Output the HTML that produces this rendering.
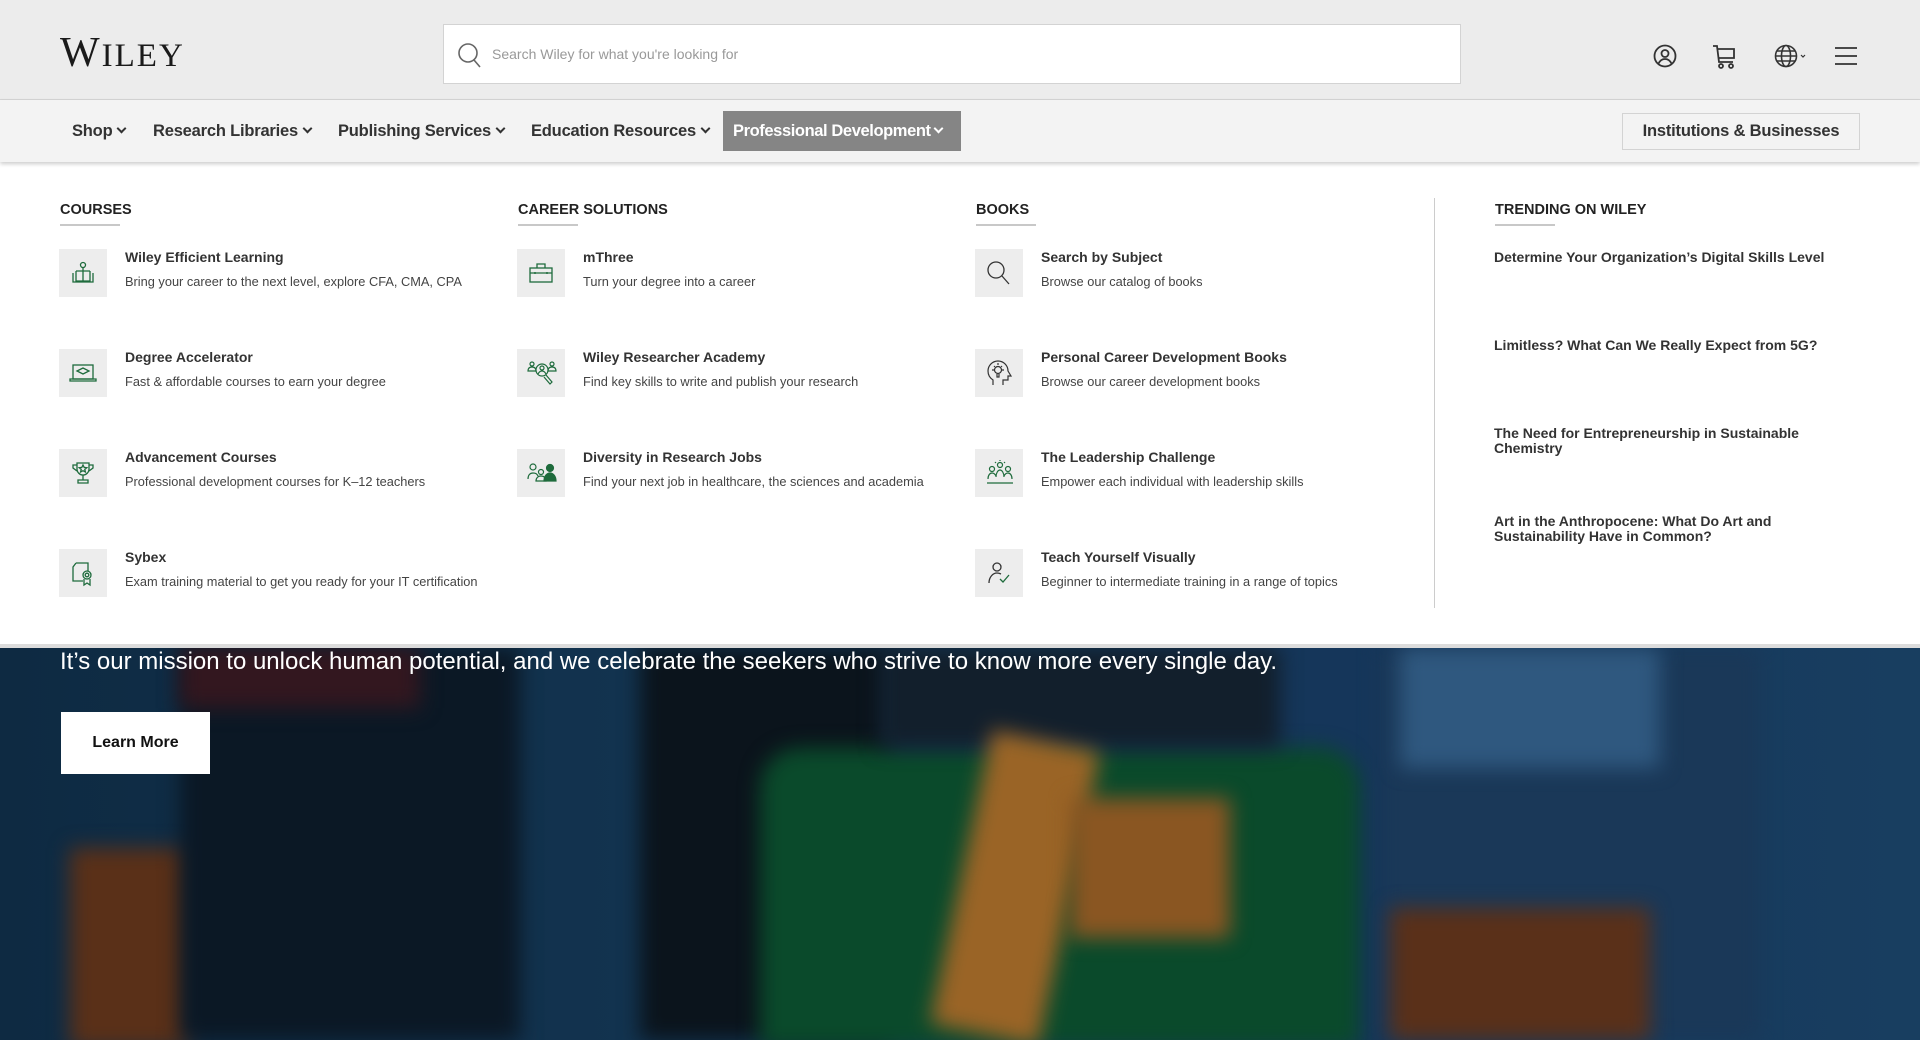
<!DOCTYPE html>
<html><head><meta charset="utf-8"><style>
*{box-sizing:border-box;margin:0;padding:0}
body{width:1920px;height:1040px;overflow:hidden;font-family:"Liberation Sans",Arial,sans-serif;background:#0f2c47;position:relative}
.top{position:absolute;left:0;top:0;width:1920px;height:100px;background:#ececec;border-bottom:1px solid #d6d6d6}
.logo{position:absolute;left:60px;top:32px;font-family:"Liberation Serif",serif;font-size:42px;letter-spacing:2px;color:#1a1a1a;line-height:1}
.logo small{font-size:33px}
.search{position:absolute;left:443px;top:24px;width:1018px;height:60px;background:#fff;border:1px solid #d3d3d3}
.search span{position:absolute;left:48px;top:21px;font-size:14px;color:#999}
.nav{position:absolute;left:0;top:100px;width:1920px;height:62px;background:#f3f3f3;box-shadow:0 2px 4px rgba(0,0,0,.2);z-index:2}
.nav .it{position:absolute;top:11px;height:40px;line-height:40px;font-size:16.5px;font-weight:bold;color:#333;padding:0 12px;letter-spacing:-.2px;white-space:nowrap}
.nav .it i{display:inline-block;width:7px;height:7px;border-right:2px solid currentColor;border-bottom:2px solid currentColor;transform:rotate(45deg);margin-left:6px;position:relative;top:-4px}
.nav .act{background:#858585;color:#fff;padding:0 10px;letter-spacing:-.4px}
.nav .act i{margin-left:4px}
.inst{position:absolute;left:1622px;top:13px;width:238px;height:37px;border:1px solid #d3d3d3;font-size:16.5px;font-weight:bold;color:#333;text-align:center;line-height:35px;letter-spacing:-.2px}
.drop{position:absolute;left:0;top:162px;width:1920px;height:486px;background:#fff;border-bottom:4px solid #dcdcdc;z-index:1}
.hd{position:absolute;top:40px;font-size:14.5px;font-weight:bold;color:#222}
.hd:after{content:"";position:absolute;left:0;top:22px;width:60px;height:2px;background:#c8c8c8}
.row{position:absolute;width:440px;height:50px}
.ic{position:absolute;left:0;top:0;width:48px;height:48px;background:#ededed}
.ic svg{position:absolute;left:10px;top:10px}
.t{position:absolute;left:66px;top:0;font-size:14px;font-weight:bold;color:#333;white-space:nowrap}
.d{position:absolute;left:66px;top:25px;font-size:12.8px;color:#444;white-space:nowrap}
.div{position:absolute;left:1434px;top:36px;width:1px;height:410px;background:#ccc}
.tr{position:absolute;left:1494px;width:370px;font-size:14px;font-weight:bold;color:#333;line-height:15px}
.hero{position:absolute;left:0;top:648px;width:1920px;height:392px;overflow:hidden;background:#12314d}
.b{position:absolute;filter:blur(10px)}
.htxt{position:absolute;left:60px;top:648px;font-size:24px;color:#fff;z-index:3}
.lm{position:absolute;left:61px;top:712px;width:149px;height:62px;background:#fff;font-size:16px;font-weight:bold;color:#111;text-align:center;line-height:62px;z-index:3}
</style></head><body>
<div class="top">
 <div class="logo">W<small>ILEY</small></div>
 <div class="search">
  <svg style="position:absolute;left:12px;top:16px" width="26" height="28" viewBox="0 0 26 28"><circle cx="12" cy="12" r="9" fill="none" stroke="#666" stroke-width="1.6"/><path d="M18 19l6 7" stroke="#666" stroke-width="1.6"/></svg>
  <span>Search Wiley for what you're looking for</span>
 </div>
 <svg style="position:absolute;left:1653px;top:44px" width="24" height="24" viewBox="0 0 24 24" fill="none" stroke="#333" stroke-width="1.8"><circle cx="12" cy="12" r="10.5"/><circle cx="12" cy="9.5" r="3.5"/><path d="M5.5 19.5c1.5-3 4-4.5 6.5-4.5s5 1.5 6.5 4.5"/></svg>
 <svg style="position:absolute;left:1712px;top:44px" width="26" height="26" viewBox="0 0 26 26" fill="none" stroke="#333" stroke-width="1.8"><path d="M1 2h4l2 16h14M6 5h16v9H7"/><circle cx="9" cy="22" r="2"/><circle cx="19" cy="22" r="2"/></svg>
 <svg style="position:absolute;left:1774px;top:44px" width="36" height="24" viewBox="0 0 36 24" fill="none" stroke="#333" stroke-width="1.6"><circle cx="12" cy="12" r="10.5"/><ellipse cx="12" cy="12" rx="4.5" ry="10.5"/><path d="M1.5 12h21M3 7h18M3 17h18"/><path d="M27 11l2 2 2-2" stroke-width="1.2"/></svg>
 <svg style="position:absolute;left:1834px;top:46px" width="24" height="20" viewBox="0 0 24 20" stroke="#333" stroke-width="1.8"><path d="M1 2h22M1 10h22M1 18h22"/></svg>
</div>
<div class="nav">
 <div class="it" style="left:60px">Shop<i></i></div>
 <div class="it" style="left:141px">Research Libraries<i></i></div>
 <div class="it" style="left:326px">Publishing Services<i></i></div>
 <div class="it" style="left:519px">Education Resources<i></i></div>
 <div class="it act" style="left:723px;width:238px">Professional Development<i></i></div>
 <div class="inst">Institutions &amp; Businesses</div>
</div>
<div class="drop">
 <div class="hd" style="left:60px">COURSES</div>
 <div class="hd" style="left:518px">CAREER SOLUTIONS</div>
 <div class="hd" style="left:976px">BOOKS</div>
 <div class="hd" style="left:1495px">TRENDING ON WILEY</div>
 <div class="div"></div>

 <div class="row" style="left:59px;top:87px"><div class="ic"><svg width="28" height="28" viewBox="0 0 28 28" fill="none" stroke="#1e6b3c" stroke-width="1.3"><circle cx="14" cy="6" r="2.5"/><path d="M14 9v14M7 12h14M7 12v10h14V12M4 14v9h20V14"/></svg></div><div class="t">Wiley Efficient Learning</div><div class="d">Bring your career to the next level, explore CFA, CMA, CPA</div></div>
 <div class="row" style="left:59px;top:187px"><div class="ic"><svg width="28" height="28" viewBox="0 0 28 28" fill="none" stroke="#1e6b3c" stroke-width="1.3"><rect x="4" y="6" width="20" height="14"/><path d="M1 20h26v2H1zM8 12l6-3 6 3-6 3z"/></svg></div><div class="t">Degree Accelerator</div><div class="d">Fast &amp; affordable courses to earn your degree</div></div>
 <div class="row" style="left:59px;top:287px"><div class="ic"><svg width="28" height="28" viewBox="0 0 28 28" fill="none" stroke="#1e6b3c" stroke-width="1.3"><path d="M8 4h12v6a6 6 0 0 1-12 0zM8 6H4v3l4 3M20 6h4v3l-4 3M14 16v5M9 21h10v3H9z"/><path d="M14 6l1.2 2.4 2.6.3-2 1.7.6 2.6-2.4-1.3-2.4 1.3.6-2.6-2-1.7 2.6-.3z"/></svg></div><div class="t">Advancement Courses</div><div class="d">Professional development courses for K–12 teachers</div></div>
 <div class="row" style="left:59px;top:387px"><div class="ic"><svg width="28" height="28" viewBox="0 0 28 28" fill="none" stroke="#1e6b3c" stroke-width="1.3"><path d="M7 4h12v8M7 4L4 8v14h10"/><circle cx="18" cy="16" r="4"/><circle cx="18" cy="16" r="1.8"/><path d="M15 20v6l3-2 3 2v-6"/></svg></div><div class="t">Sybex</div><div class="d">Exam training material to get you ready for your IT certification</div></div>

 <div class="row" style="left:517px;top:87px"><div class="ic"><svg width="28" height="28" viewBox="0 0 28 28" fill="none" stroke="#1e6b3c" stroke-width="1.3"><rect x="3" y="9" width="22" height="14"/><path d="M10 9V5h8v4M3 14h22M8 13v2M20 13v2"/></svg></div><div class="t">mThree</div><div class="d">Turn your degree into a career</div></div>
 <div class="row" style="left:517px;top:187px"><div class="ic"><svg width="30" height="30" viewBox="0 0 30 30" fill="none" stroke="#1e6b3c" stroke-width="1.2"><circle cx="5" cy="5" r="2"/><circle cx="25" cy="5" r="2"/><path d="M1 12c0-3 2-4 4-4s4 1 4 4zM21 12c0-3 2-4 4-4s4 1 4 4z"/><circle cx="15" cy="11" r="6"/><circle cx="15" cy="9" r="2"/><path d="M11 15c1-2 2.5-3 4-3s3 1 4 3M19 16l6 7-2 2-6-7"/></svg></div><div class="t">Wiley Researcher Academy</div><div class="d">Find key skills to write and publish your research</div></div>
 <div class="row" style="left:517px;top:287px"><div class="ic"><svg width="30" height="28" viewBox="0 0 30 28" fill="none" stroke="#1e6b3c" stroke-width="1.2"><circle cx="6" cy="8" r="3"/><path d="M1 20c0-4 2-6 5-6s4 1 5 3"/><circle cx="14" cy="13" r="2.5"/><path d="M9 22c0-3 2-5 5-5s5 2 5 5z"/><circle cx="23" cy="9" r="3.5" fill="#1e6b3c"/><path d="M17 22c0-5 3-8 6-8s6 3 6 8z" fill="#1e6b3c"/></svg></div><div class="t">Diversity in Research Jobs</div><div class="d">Find your next job in healthcare, the sciences and academia</div></div>

 <div class="row" style="left:975px;top:87px"><div class="ic"><svg width="28" height="28" viewBox="0 0 28 28" fill="none" stroke="#333" stroke-width="1.3"><circle cx="11" cy="11" r="8"/><path d="M17 17l7 8"/></svg></div><div class="t">Search by Subject</div><div class="d">Browse our catalog of books</div></div>
 <div class="row" style="left:975px;top:187px"><div class="ic"><svg width="28" height="28" viewBox="0 0 28 28" fill="none" stroke="#333" stroke-width="1.2"><path d="M8 26v-5c-3-2-5-5-5-9a10 10 0 0 1 20 0l3 5h-3v4h-5v5"/><circle cx="13" cy="11" r="3.5"/><path d="M13 4v2M7 11h2M17 11h2M9 7l1 1M17 7l-1 1M12 15v3h2v-3"/></svg></div><div class="t">Personal Career Development Books</div><div class="d">Browse our career development books</div></div>
 <div class="row" style="left:975px;top:287px"><div class="ic"><svg width="30" height="28" viewBox="0 0 30 28" fill="none" stroke="#1e6b3c" stroke-width="1.2"><circle cx="15" cy="6" r="2.5"/><circle cx="7" cy="10" r="2.5"/><circle cx="23" cy="10" r="2.5"/><path d="M11 18c0-4 2-7 4-7s4 3 4 7M3 20c0-4 2-6 4-6s3 1 4 3M27 20c0-4-2-6-4-6s-3 1-4 3M2 24h26M15 1v1M10 3l1 1M20 3l-1 1"/></svg></div><div class="t">The Leadership Challenge</div><div class="d">Empower each individual with leadership skills</div></div>
 <div class="row" style="left:975px;top:387px"><div class="ic"><svg width="28" height="28" viewBox="0 0 28 28" fill="none" stroke="#333" stroke-width="1.3"><circle cx="12" cy="8" r="4"/><path d="M4 24c0-6 4-10 8-10 2 0 3 .5 4 1"/><path d="M15 20l3 3 6-7" stroke="#1e6b3c"/></svg></div><div class="t">Teach Yourself Visually</div><div class="d">Beginner to intermediate training in a range of topics</div></div>

 <div class="tr" style="top:88px">Determine Your Organization’s Digital Skills Level</div>
 <div class="tr" style="top:176px">Limitless? What Can We Really Expect from 5G?</div>
 <div class="tr" style="top:264px">The Need for Entrepreneurship in Sustainable Chemistry</div>
 <div class="tr" style="top:352px">Art in the Anthropocene: What Do Art and Sustainability Have in Common?</div>
</div>
<div class="hero">
 <div class="b" style="left:0;top:0;width:1920px;height:392px;filter:none;background:linear-gradient(90deg,#0e2a42,#133552 40%,#15365a 70%,#183e60)"></div>
 <div class="b" style="left:70px;top:200px;width:120px;height:200px;background:#5a3018"></div>
 <div class="b" style="left:180px;top:0;width:340px;height:392px;background:#0b1825"></div>
 <div class="b" style="left:180px;top:0;width:240px;height:60px;background:#33171f"></div>
 <div class="b" style="left:640px;top:0;width:250px;height:392px;background:#0b141c"></div>
 <div class="b" style="left:760px;top:100px;width:600px;height:300px;background:#0a4a2b;border-radius:40px 40px 0 0"></div>
 <div class="b" style="left:880px;top:0;width:400px;height:100px;background:#121f2c"></div>
 <div class="b" style="left:960px;top:90px;width:110px;height:300px;background:#9a6426;transform:rotate(12deg)"></div>
 <div class="b" style="left:1070px;top:150px;width:160px;height:140px;background:#8a5622"></div>
 <div class="b" style="left:1380px;top:0;width:380px;height:392px;background:#1a3858"></div>
 <div class="b" style="left:1390px;top:260px;width:260px;height:132px;background:#5a3019"></div>
 <div class="b" style="left:1400px;top:0;width:260px;height:120px;background:#2f587f"></div>
</div>
<div class="htxt">It’s our mission to unlock human potential, and we celebrate the seekers who strive to know more every single day.</div>
<div class="lm">Learn More</div>
</body></html>
